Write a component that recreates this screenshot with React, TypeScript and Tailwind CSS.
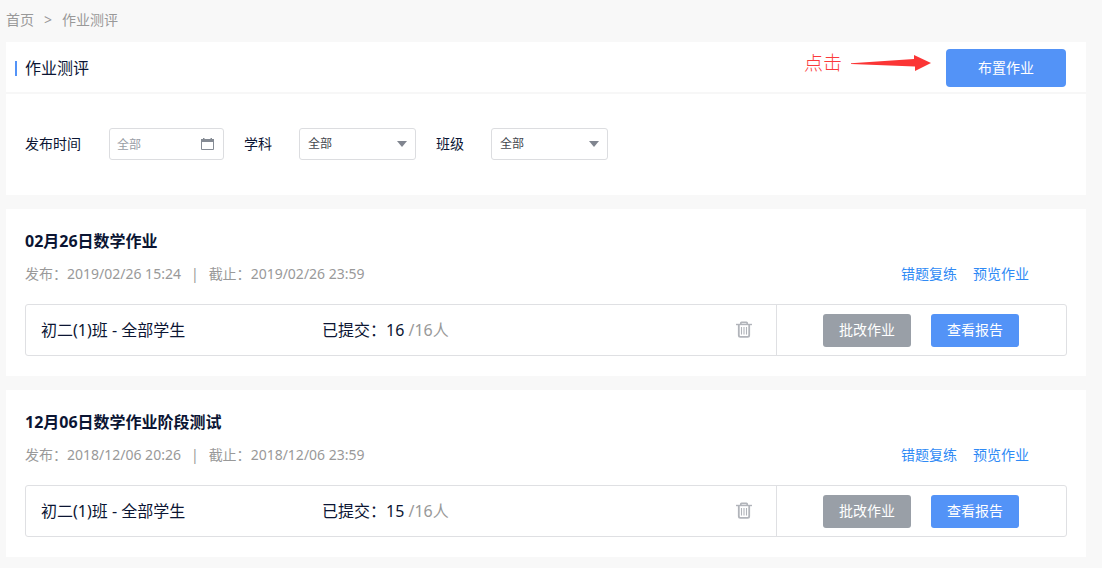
import React from 'react';

type Homework = {
  title: string;
  published: string;
  deadline: string;
  group: string;
  submitted: number;
  total: number;
};

const homeworks: Homework[] = [
  {
    title: '02月26日数学作业',
    published: '2019/02/26 15:24',
    deadline: '2019/02/26 23:59',
    group: '初二(1)班 - 全部学生',
    submitted: 16,
    total: 16,
  },
  {
    title: '12月06日数学作业阶段测试',
    published: '2018/12/06 20:26',
    deadline: '2018/12/06 23:59',
    group: '初二(1)班 - 全部学生',
    submitted: 15,
    total: 16,
  },
];

function TrashIcon() {
  return (
    <svg width="16" height="18" viewBox="0 0 16 18" fill="none" stroke="#b1b4ba" aria-hidden="true">
      <path d="M0 3.5h16" strokeWidth="1.4" />
      <path d="M4.8 3.4V2q0-.7.7-.7h5q.7 0 .7.7v1.4" strokeWidth="1.7" />
      <path d="M2.8 3.5v10.8q0 1.6 1.6 1.6h7.2q1.6 0 1.6-1.6V3.5" strokeWidth="1.8" />
      <path d="M5.5 6v7.5M8 6v7.5M10.5 6v7.5" strokeWidth="1.1" />
    </svg>
  );
}

function CalendarIcon() {
  return (
    <svg width="13" height="12" viewBox="0 0 13 12" aria-hidden="true">
      <path d="M2 0h1.5v1H9.5V0H11v1h2v3H0V1h2z" fill="#858b94" />
      <path d="M.5 3v8.5h12V3" fill="none" stroke="#858b94" />
    </svg>
  );
}

function SelectFilter({ id, label }: { id: string; label: string }) {
  return (
    <div className="flex items-center gap-[27px]">
      <label htmlFor={id}>{label}</label>
      <div className="relative">
        <select
          id={id}
          className="block h-8 w-[117px] appearance-none rounded-[3px] border border-[#dcdde0] bg-white px-2 text-xs text-[#44474f] outline-none"
        >
          <option>全部</option>
        </select>
        <svg
          className="pointer-events-none absolute top-[13px] right-[9px]"
          width="10"
          height="6"
          viewBox="0 0 10 6"
          aria-hidden="true"
        >
          <path d="M0 0h10L5 6z" fill="#80858f" />
        </svg>
      </div>
    </div>
  );
}

function HomeworkCard({ item }: { item: Homework }) {
  return (
    <section className="mt-3.5 bg-white px-[19px] py-5">
      <h2 className="text-base leading-6 font-bold">{item.title}</h2>
      <div className="mt-2.5 flex items-center justify-between pr-[38px] text-sm leading-[22px]">
        <p className="flex gap-2.5 text-[#999]">
          <span>发布：{item.published}</span>
          <span>|</span>
          <span>截止：{item.deadline}</span>
        </p>
        <nav className="flex gap-4 text-[#2f8af5]">
          <a href="#retrain">错题复练</a>
          <a href="#preview">预览作业</a>
        </nav>
      </div>
      <div className="mt-[19px] flex h-[52px] rounded-[3px] border border-[#dfe0e3]">
        <div className="flex flex-1 items-center pr-6 pl-[15px] text-base leading-6">
          <div className="w-[281px]">{item.group}</div>
          <div>
            已提交：{item.submitted} <span className="text-[#999]">/{item.total}人</span>
          </div>
          <button type="button" aria-label="删除" className="ml-auto">
            <TrashIcon />
          </button>
        </div>
        <div className="flex w-[290px] items-center gap-5 border-l border-[#dfe0e3] pl-[46px] text-sm text-white">
          <button type="button" className="h-[33px] w-[88px] rounded-[3px] bg-[#999fa7]">
            批改作业
          </button>
          <button type="button" className="h-[33px] w-[88px] rounded-[3px] bg-[#5393f7]">
            查看报告
          </button>
        </div>
      </div>
    </section>
  );
}

export default function App() {
  return (
    <div
      lang="zh-CN"
      className="min-h-screen bg-[#f8f8f8] pr-4 pb-[11px] pl-1.5 font-['Noto_Sans','Noto_Sans_CJK_SC',sans-serif] text-[#0b1533]"
    >
      <nav className="flex h-[42px] items-center gap-2.5 pb-0.5 text-sm text-[#999]">
        <a href="#home">首页</a>
        <span>&gt;</span>
        <span>作业测评</span>
      </nav>

      <main>
        <section className="bg-white">
          <header className="flex items-center border-b-2 border-[#f7f7f7] pt-[7px] pr-5 pb-[5px] pl-[9px]">
            <span className="h-[15px] w-0.5 bg-[#5393f7]" />
            <h1 className="ml-2 text-base leading-6">作业测评</h1>
            <div className="mr-[15px] ml-auto flex items-center gap-[9px] self-start text-[#fb3b3b]">
              <span className="text-[19px] leading-7 font-light">点击</span>
              <svg width="80" height="18" viewBox="0 0 80 18" aria-hidden="true">
                <path d="M0 9.3 63 5V1L80 9 64 17v-4.5L0 10z" fill="#fb3535" />
              </svg>
            </div>
            <button type="button" className="h-[38px] w-[120px] rounded bg-[#5393f7] text-sm text-white">
              布置作业
            </button>
          </header>

          <form className="flex flex-wrap items-center gap-5 px-[19px] pt-[34px] pb-[35px] text-sm">
            <div className="flex items-center gap-7">
              <label htmlFor="publish-time">发布时间</label>
              <div className="relative">
                <input
                  id="publish-time"
                  type="text"
                  placeholder="全部"
                  className="block h-8 w-[115px] rounded-[3px] border border-[#dcdde0] bg-white px-[7px] text-xs outline-none placeholder:text-[#999da5]"
                />
                <span className="pointer-events-none absolute top-2.5 right-2.5">
                  <CalendarIcon />
                </span>
              </div>
            </div>
            <SelectFilter id="subject" label="学科" />
            <SelectFilter id="class" label="班级" />
          </form>
        </section>

        {homeworks.map((item) => (
          <HomeworkCard key={item.title} item={item} />
        ))}
      </main>
    </div>
  );
}
